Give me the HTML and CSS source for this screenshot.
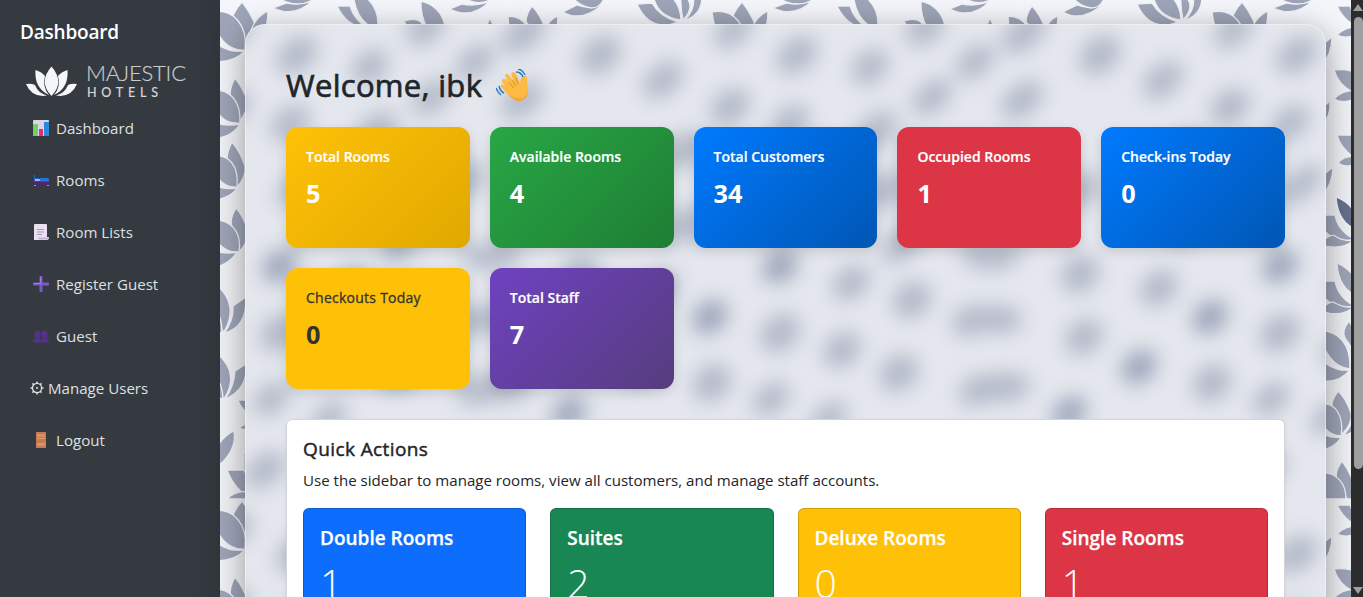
FILE: index.html
```html
<!DOCTYPE html>
<html lang="en">
<head>
<meta charset="utf-8">
<title>Dashboard</title>
<link rel="stylesheet" href="styles.css">
</head>
<body>
<svg class="wallpaper" width="1363" height="597" viewBox="0 0 1363 597" aria-hidden="true">
  <defs>
    <linearGradient id="fog" x1="0" y1="0" x2="0" y2="1"><stop offset="0" stop-color="#f4f6fb"/><stop offset=".3" stop-color="#f0f1f4"/><stop offset="1" stop-color="#f1f2f5"/></linearGradient>
    <pattern id="lotus" width="500" height="499" patternUnits="userSpaceOnUse">
      <g fill="#9ea5b8" stroke="#f1f3f7" stroke-width="1.3">
        <path d="M242 2Q231 14 232 24L245 45Q257 33 255 24Q250 12 242 2Z"/><path d="M268 11Q250 19 247 48Q268 40 268 11Z"/><path d="M212 12C234 8 248 26 245 50C228 51 215 38 212 12Z"/><path d="M205 32Q222 54 245 51Q230 66 207 60Z"/>
        <path d="M283 -6Q303 -6 312 0Q300 8 284 1Z"/><path d="M273 8Q287 3 287 3Q300 6 312 1Q295 18 273 8Z"/>
        <path d="M337 6L350 6Q354 19 366 27Q348 28 337 6Z"/><path d="M353 -10Q378 0 378 24Q375 28 367 24Q354 14 353 -10Z"/><path d="M337 35Q347 25 365 27Q352 42 337 35Z"/>
        <path d="M404 21Q420 16 424 27L410 32Z"/><path d="M421 1Q441 6 445 26L428 30Q420 15 421 1Z"/>
        <path d="M450 9Q462 4 462 4Q477 7 490 1Q472 20 450 9Z"/><path d="M460 -5Q479 -8 490 0Q475 7 460 -5Z"/>
        <path d="M8 16Q22 16 27 27L9 29Z"/><path d="M32 6Q26 14 26 22L37 34L45 28Q40 14 32 6Z"/><path d="M58 16Q48 20 46 30L57 29Z"/><path d="M490 18L494 27L487 25Z"/>
        <path d="M63 12L77 5Q90 10 103 4Q82 23 63 12Z"/><path d="M73 -2H104Q101 8 91 8Q80 6 73 -2Z"/>
        <path d="M137 4L152 3Q160 17 178 22Q150 33 137 4Z"/><path d="M153 -12Q180 -6 181 20Q157 17 153 -5Z"/><path d="M181 -8Q198 5 183 20Q180 6 181 -8Z"/><path d="M202 -4Q202 15 185 20Q196 8 193 -4Z"/>
        <path d="M235 78Q228 91 231 98L240 121Q248 111 247 100Q243 88 235 78Z"/><path d="M210 90C230 88 241 101 240 123Q215 125 210 90Z"/><path d="M205 117Q220 128 240 124Q231 139 208 139Z"/>
        <path d="M232 142Q224 158 229 166L237 187Q246 178 245 166Q240 151 232 142Z"/><path d="M210 155C230 154 239 166 237 187Q215 188 210 155Z"/><path d="M205 180Q220 191 237 188Q228 201 205 200Z"/>
        <path d="M236 208Q228 221 233 229L240 251Q250 240 247 228Q242 214 236 208Z"/><path d="M210 220C232 218 242 233 239 252Q215 253 210 220Z"/><path d="M205 245Q220 256 237 252Q228 267 205 269Z"/>
        <path d="M218 286Q239 306 224 332Q209 317 218 286Z"/><path d="M246 297Q247 328 224 333Q234 321 233 306Z"/><path d="M210 304Q222 312 222 333L208 330Z"/>
        <path d="M218 354Q240 374 224 399Q209 383 218 354Z"/><path d="M246 364Q248 390 225 399Q234 387 235 371Z"/><path d="M210 370Q222 379 223 399L208 396Z"/>
        <path d="M238 400H254L247 413Q240 407 238 400Z"/><path d="M239 428Q247 421 257 425Q248 432 239 428Z"/><path d="M234 431Q237 449 220 465L218 445Q226 434 234 431Z"/><path d="M244 451V482L260 480Q252 462 244 451Z"/>
        <path d="M227 470L244 470L258 499Q237 496 227 470Z"/><path d="M227 499Q236 489 255 492L258 499Z"/>
        <path d="M332 37Q332 55 321 65L318 48Z"/><path d="M353 44L351 75L360 65Z"/>
        <path d="M334 70Q350 68 358 75L353 92Q339 86 334 70Z"/><path d="M334 99Q344 88 363 91Q350 107 334 99Z"/><path d="M330 101Q331 118 321 125L317 112Z"/>
        <path d="M337 135H356L353 157Q340 147 337 135Z"/><path d="M338 163Q346 153 363 158Q350 171 338 163Z"/><path d="M333 167Q333 184 321 197L317 180Z"/>
        <path fill="#65708d" d="M336 197Q359 206 358 230Q338 224 336 197Z"/><path d="M314 215H335Q338 231 354 239Q330 247 314 215Z"/><path d="M321 242Q332 233 335 236Q344 242 354 240Q342 251 321 245Z"/>
        <path d="M337 263Q360 273 358 297Q338 288 337 263Z"/><path d="M314 281H335Q338 297 354 306Q328 313 314 281Z"/><path d="M321 308Q332 300 335 303Q344 308 354 307Q342 318 321 311Z"/>
        <path d="M349 321Q341 331 345 338L352 348L361 342Z"/><path d="M319 330Q351 332 350 369Q326 366 319 330Z"/><path d="M316 354Q331 372 350 370Q338 385 317 380Z"/>
        <path d="M338 391Q329 403 333 410L342 434Q353 424 351 413Q346 398 338 391Z"/><path d="M316 405C337 399 344 418 341 436Q321 435 316 405Z"/><path d="M316 428Q326 439 341 437Q334 451 312 450Z"/><path d="M360 422Q357 432 343 436Q351 427 352 421Z"/>
        <path d="M342 461Q334 472 337 479L347 499H358Q353 475 342 461Z"/><path d="M316 473C340 470 346 487 346 499H316Z"/>
      </g>
    </pattern>
    <pattern id="haze" class="haze" width="500" height="499" patternUnits="userSpaceOnUse">
      <rect width="500" height="499" fill="#e4e7ed"/>
      <g fill="#b3b9c9">
        <ellipse cx="297" cy="55" rx="19" ry="16"/><ellipse cx="370" cy="67" rx="17" ry="15"/><ellipse cx="425" cy="28" rx="18" ry="15"/><ellipse cx="475" cy="62" rx="18" ry="14"/><ellipse cx="432" cy="97" rx="19" ry="14"/><ellipse cx="290" cy="123" rx="18" ry="15"/><ellipse cx="377" cy="130" rx="19" ry="15"/><ellipse cx="24" cy="33" rx="22" ry="15"/><ellipse cx="100" cy="55" rx="19" ry="17"/><ellipse cx="163" cy="80" rx="19" ry="15"/><ellipse cx="233" cy="31" rx="18" ry="14"/><ellipse cx="22" cy="100" rx="20" ry="15"/><ellipse cx="230" cy="107" rx="18" ry="16"/>
        <ellipse cx="300" cy="185" rx="23" ry="13"/><ellipse cx="185" cy="150" rx="18" ry="16"/><ellipse cx="185" cy="225" rx="18" ry="16"/><ellipse cx="385" cy="190" rx="18" ry="16"/><ellipse cx="465" cy="180" rx="18" ry="16"/><ellipse cx="80" cy="190" rx="18" ry="16"/><ellipse cx="400" cy="245" rx="18" ry="14"/>
        <ellipse cx="351" cy="283" rx="17" ry="15"/><ellipse cx="412" cy="300" rx="17" ry="17"/><ellipse cx="280" cy="333" rx="18" ry="17"/><ellipse cx="342" cy="350" rx="17" ry="16"/><ellipse cx="399" cy="373" rx="17" ry="17"/><ellipse cx="212" cy="383" rx="17" ry="17"/><ellipse cx="271" cy="399" rx="17" ry="14"/><ellipse cx="329" cy="418" rx="17" ry="13"/><ellipse cx="80" cy="274" rx="17" ry="17"/><ellipse cx="84" cy="337" rx="17" ry="16"/><ellipse cx="159" cy="288" rx="17" ry="16"/><ellipse cx="265" cy="470" rx="19" ry="15"/>
        <path d="M457 309Q475 305 500 306V332Q480 330 466 337Q446 339 457 309ZM0 306Q22 307 22 320Q20 335 0 332ZM470 377L500 373V400Q470 406 462 406Q455 389 470 377ZM0 373Q32 372 30 386Q26 403 0 400ZM460 245H500V269Q480 272 464 261ZM0 245H23Q20 265 0 269Z"/>
      </g>
      <g fill="#9ba5ba"><ellipse cx="280" cy="266" rx="16" ry="15"/><ellipse cx="210" cy="317" rx="16" ry="15"/><ellipse cx="139" cy="367" rx="16" ry="15"/><ellipse cx="69" cy="413" rx="16" ry="14"/></g>
    </pattern>
    <filter id="soft" x="0" y="0" width="1" height="1" color-interpolation-filters="sRGB"><feGaussianBlur stdDeviation="10"/></filter>
    <clipPath id="glass"><rect x="245" y="24" width="1081" height="700" rx="20"/></clipPath>
  </defs>
  <rect width="1363" height="597" fill="url(#fog)"/>
  <rect width="1363" height="597" fill="url(#lotus)"/>
  <g clip-path="url(#glass)"><rect x="150" y="-60" width="1280" height="800" fill="url(#haze)" filter="url(#soft)"/></g>
</svg>

<div class="layout">
  <aside class="sidebar">
    <h2 class="brand">Dashboard</h2>
    <svg class="logo" width="170" height="44" viewBox="0 0 170 44">
      <g fill="#f5f6fa">
        <path d="M31.500 6.500Q45 22 31.500 36Q18 22 31.500 6.500Z"/><path d="M15.500 10Q22 12 25 16Q22 27 29 35Q14 28 15.500 10Z"/><path d="M47.500 10Q41 12 38 16Q41 27 34 35Q49 28 47.500 10Z"/><path d="M6 24Q11 23 15 25Q18 33 27 35.500Q12 38 6 24Z"/><path d="M57 24Q52 23 48 25Q45 33 36 35.500Q51 38 57 24Z"/>
      </g>
      <text class="logo-name" x="66" y="20.500" textLength="100">MAJESTIC</text>
      <text class="logo-sub" x="67" y="37" textLength="75">HOTELS</text>
    </svg>
    <nav class="nav">
      <a class="nav-item"><svg class="ico" viewBox="0 0 16 16"><rect width="16" height="16" rx="1" fill="#ddd4e8"/><path d="M0 4h5v12H0z" fill="#73cf62"/><path d="M6 9h4v7H6z" fill="#e52e75"/><path d="M11 2h5v14h-5z" fill="#268bd8"/></svg>Dashboard</a>
      <a class="nav-item"><svg class="ico" viewBox="0 0 16 16"><path d="M1 3h1v3h4v4H1z" fill="#2467c7"/><path d="M2 7h5v2H2z" fill="#b9a6ec"/><path d="M7 6h7q2 0 2 2V10H7z" fill="#1f79dc"/><path d="M1 9.500h15V13H1z" fill="#50256f"/><path d="M1 13h2v1H1zM14 13h2v1h-2z" fill="#a890c5"/></svg>Rooms</a>
      <a class="nav-item"><svg class="ico" viewBox="0 0 16 16"><path d="M1 1q0-1 1-1h11q1 0 1 1v12h2q0 3-2 3H1z" fill="#e9e0f3"/><path d="M5 13.500h11q0 2-2 2H6z" fill="#c4b2dc"/><path d="M4 5.500h7M4 8h7M4 10.500h5" stroke="#a59bb0"/></svg>Room Lists</a>
      <a class="nav-item"><svg class="ico" viewBox="0 0 16 16"><path d="M8 1v14M1 8h14" stroke="#7d58c9" stroke-width="3" stroke-linecap="round"/><path d="M7.500 1v6.500H1" stroke="#9b80d5" fill="none"/></svg>Register Guest</a>
      <a class="nav-item"><svg class="ico" viewBox="0 0 16 16"><g fill="#54318b"><ellipse cx="4.500" cy="6.500" rx="3" ry="4"/><ellipse cx="11.500" cy="6.500" rx="3" ry="4"/><path d="M0 14q0-4 4.200-4T8 13q0-3 4-3t4 4q-4 1-8 0-4 1-8 0z"/></g></svg>Guest</a>
      <a class="nav-item nav-item-gear"><svg class="gear" viewBox="0 0 14 14" fill="none" stroke="#dee0e3"><circle cx="7" cy="7" r="4.600" stroke-width="1.300"/><circle cx="7" cy="7" r="1" fill="#dee0e3" stroke="none"/><path d="M7 .5v2M7 11.500v2M.5 7h2M11.500 7h2M2.400 2.400l1.400 1.400M10.200 10.200l1.400 1.400M2.400 11.600l1.400-1.400M10.200 3.800l1.400-1.400" stroke-width="1.500"/></svg>Manage Users</a>
      <a class="nav-item"><svg class="ico" viewBox="0 0 16 16"><path d="M3 0h10v16H3z" fill="#c47b58"/><path d="M4 2h8v3H4zM4 11h8v3H4z" fill="#d68e65"/><path d="M4 6.500h8M5 11.500h7" stroke="#e7a04d"/></svg>Logout</a>
    </nav>
  </aside>

  <main class="panel">
    <h1 class="welcome"><span class="greeting">Welcome, ibk</span>
      <svg class="wave" viewBox="0 0 34 34"><path d="M10 17Q4 12 7 10Q9 9 13 14L9 7Q9 3 13 6L18 13L15 5Q17 1 20 5L24 14Q25 8 28 7Q31 6 31 10L32 21Q31 32 22 32Q16 31 10 23L5 18Q4 13 10 17Z" fill="#fcb944"/><path d="M13 14L18 19M16 11L20 17M20 9L22 15" stroke="#dc9128" fill="none"/><path d="M12 24Q20 32 27 29Q31 27 32 20Q32 32 22 32Q17 31 12 24Z" fill="#f7a035"/><path d="M20 3Q25 3 27 8M22 0Q27 1 29 6M3 17Q4 22 8 24M0 19Q2 24 5 26" fill="none" stroke="#287fbd" stroke-width="1.500"/></svg>
    </h1>
    <section class="stats">
      <div class="stat gold"><h5>Total Rooms</h5><p>5</p></div>
      <div class="stat green"><h5>Available Rooms</h5><p>4</p></div>
      <div class="stat blue"><h5>Total Customers</h5><p>34</p></div>
      <div class="stat red"><h5>Occupied Rooms</h5><p>1</p></div>
      <div class="stat blue"><h5>Check-ins Today</h5><p>0</p></div>
      <div class="stat yellow"><h5>Checkouts Today</h5><p>0</p></div>
      <div class="stat purple"><h5>Total Staff</h5><p>7</p></div>
    </section>
    <section class="quick">
      <h3>Quick Actions</h3>
      <p class="hint">Use the sidebar to manage rooms, view all customers, and manage staff accounts.</p>
      <div class="rooms">
        <div class="room primary"><h4>Double Rooms</h4><p>1</p></div>
        <div class="room success"><h4>Suites</h4><p>2</p></div>
        <div class="room warning"><h4>Deluxe Rooms</h4><p>0</p></div>
        <div class="room danger"><h4>Single Rooms</h4><p>1</p></div>
      </div>
    </section>
  </main>

  <div class="scrollbar"><span class="arrow up"></span><span class="thumb"></span><span class="arrow down"></span></div>
</div>
</body>
</html>
```
FILE: styles.css
```css
* { box-sizing: border-box; }
body { margin: 0; height: 597px; overflow: hidden; position: relative; font-family: "Open Sans", "Noto Sans", sans-serif; color: #212529; }
h1, h2, h3, h4, h5, p { margin: 0; }
.wallpaper { position: absolute; inset: 0; }
.haze ellipse { transform-box: fill-box; transform-origin: center; transform: rotate(-40deg) scale(1.22, 1); }
.layout { position: relative; display: flex; height: 597px; overflow: hidden; }

.sidebar { width: 220px; flex: none; padding: 20px 0 0 20px; background: linear-gradient(90deg, #343a40 88%, #31363c); color: #fff; }
.brand { font-size: 19px; font-weight: 600; line-height: 24px; letter-spacing: -.2px; }
.logo { display: block; margin-top: 16px; }
.logo-name { font: 300 22px Lato, sans-serif; fill: #c9cacc; stroke: #c9cacc; stroke-width: .2px; }
.logo-sub { font: 400 12.5px Lato, sans-serif; fill: #d8d8da; letter-spacing: 4px; stroke: #d8d8da; stroke-width: .2px; }
.nav { display: flex; flex-direction: column; margin-top: -2px; }
.nav-item { height: 52px; display: flex; align-items: center; gap: 7px; padding-left: 13px; font-size: 15.1px; color: #dee0e3; white-space: nowrap; }
.nav-item-gear { padding-left: 10px; gap: 4px; }
.ico { width: 16px; height: 16px; }
.gear { width: 14px; height: 14px; }

.panel { width: 1081px; height: 800px; flex: none; margin: 24px 25px 0; border: 1px solid rgba(255, 255, 255, .4); border-radius: 20px; padding: 39px 40px 40px; box-shadow: 0 8px 32px rgba(0, 0, 0, .38); }
.welcome { display: flex; align-items: center; gap: 14px; height: 42px; font-size: 31px; font-weight: 400; white-space: nowrap; }
.greeting { letter-spacing: .3px; -webkit-text-stroke: .7px #212529; }
.wave { width: 34px; height: 34px; margin-top: 2px; }
.stats { display: grid; grid-template-columns: repeat(5, 1fr); gap: 20px; margin-top: 21px; }
.stat { height: 121px; border-radius: 12px; padding: 20px; color: #fff; box-shadow: 0 4px 12px rgba(0, 0, 0, .13); }
.stat h5 { font-size: 14px; font-weight: 600; line-height: 20px; white-space: nowrap; -webkit-text-stroke: .2px currentColor; }
.stat p { margin-top: 8px; font-size: 25.3px; font-weight: 700; line-height: 36px; }
.gold { background: linear-gradient(135deg, #ffc107, #e0a800); }
.green { background: linear-gradient(135deg, #28a745, #1e7e34); }
.blue { background: linear-gradient(135deg, #007bff, #0056b3); }
.red { background: #dc3545; }
.yellow { background: #ffc107; color: #333; }
.yellow h5 { font-weight: 400; letter-spacing: .25px; -webkit-text-stroke-width: .3px; }
.purple { background: linear-gradient(135deg, #6f42c1, #563d7c); }

.quick { height: 360px; margin-top: 30px; padding: 16px; background: #fff; border: 1px solid #d3d4d7; border-radius: 6px; box-shadow: 0 2px 4px rgba(0, 0, 0, .075); }
.quick h3 { font-size: 19px; font-weight: 400; line-height: 26px; letter-spacing: .4px; -webkit-text-stroke: .45px #212529; }
.hint { margin-top: 6px; font-size: 15.08px; line-height: 24px; white-space: nowrap; }
.rooms { display: grid; grid-template-columns: repeat(4, 1fr); gap: 24px; margin-top: 16px; }
.room { height: 130px; border: 1px solid rgba(0, 0, 0, .175); border-radius: 6px; padding: 16px; color: #fff; }
.room h4 { font-size: 19px; font-weight: 600; line-height: 26px; white-space: nowrap; -webkit-text-stroke: .25px #fff; }
.room p { font-size: 39px; font-weight: 300; line-height: 48px; margin-top: 8px; }
.primary { background-color: #0d6efd; }
.success { background-color: #198754; }
.warning { background-color: #ffc107; }
.danger { background-color: #dc3545; }

.scrollbar { width: 12px; flex: none; display: flex; flex-direction: column; align-items: flex-end; background: #2c2c2c; padding: 4px 0 3px; }
.arrow { width: 10px; height: 7px; background: #9f9f9f; flex: none; }
.up { clip-path: polygon(50% 0, 100% 100%, 0 100%); }
.down { clip-path: polygon(0 0, 100% 0, 50% 100%); margin-top: auto; }
.thumb { width: 9px; height: 452px; margin-top: 6px; border-radius: 5px; background: #9f9f9f; }
```
